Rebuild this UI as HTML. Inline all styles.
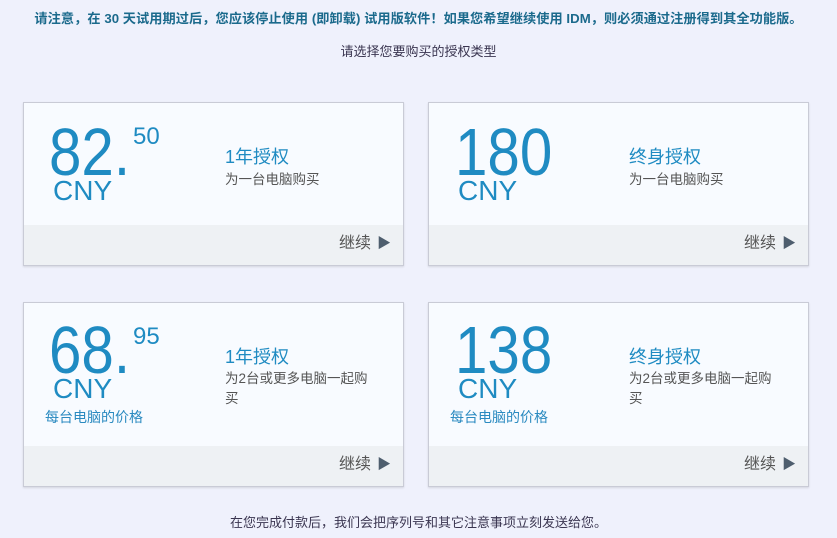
<!DOCTYPE html>
<html><head><meta charset="utf-8"><style>
*{margin:0;padding:0;box-sizing:border-box}
body{width:837px;height:538px;background:#eff1fc;font-family:"Liberation Sans","Noto Sans CJK SC",sans-serif;position:relative;overflow:hidden}
.a{position:absolute;white-space:nowrap}
.top{left:0;width:837px;text-align:center;top:8px;font-size:13.2px;font-weight:bold;color:#1b6a8c;letter-spacing:0.05px}
.sub{left:0;width:837px;text-align:center;top:41px;font-size:13px;color:#3a3550}
.card{position:absolute;width:381px;background:#f8fbff;border:1px solid #c9cbd6;box-shadow:0 1px 2px rgba(0,0,0,.12)}
.foot{position:absolute;left:0;right:0;bottom:0;height:40px;background:#eef1f4}
.big{font-size:67px;color:#1f8bc2;line-height:1;transform:scaleX(0.87);transform-origin:left top}
.cent{font-size:24px;color:#1f8bc2;line-height:1}
.cny{font-size:28px;color:#1f8bc2;line-height:1}
.t{font-size:18px;color:#1f8bc2;line-height:1}
.d{font-size:13.5px;color:#555;line-height:20px}
.per{font-size:14px;color:#2a8ac0;line-height:1}
.go{font-size:16px;color:#555;line-height:1;right:12px;bottom:13px}
.go span{color:#4e5e6e;font-size:14px;margin-left:6px}
.bot{left:0;width:837px;text-align:center;top:512px;font-size:13px;color:#3a3550}
</style></head><body>
<div class="a top">请注意，在 30 天试用期过后，您应该停止使用 (即卸载) 试用版软件！如果您希望继续使用 IDM，则必须通过注册得到其全功能版。</div>
<div class="a sub">请选择您要购买的授权类型</div>

<div class="card" style="left:23px;top:102px;height:164px">
<div class="foot"></div>
<div class="a big" style="left:25px;top:16px">82.</div>
<div class="a cent" style="left:109px;top:22px">50</div>
<div class="a cny" style="left:29px;top:74px">CNY</div>
<div class="a t" style="left:201px;top:45px">1年授权</div>
<div class="a d" style="left:201px;top:67px">为一台电脑购买</div>
<div class="a go">继续<span>▶</span></div>
</div>

<div class="card" style="left:428px;top:102px;height:164px">
<div class="foot"></div>
<div class="a big" style="left:26px;top:16px">180</div>
<div class="a cny" style="left:29px;top:74px">CNY</div>
<div class="a t" style="left:200px;top:45px">终身授权</div>
<div class="a d" style="left:200px;top:67px">为一台电脑购买</div>
<div class="a go">继续<span>▶</span></div>
</div>

<div class="card" style="left:23px;top:302px;height:185px">
<div class="foot"></div>
<div class="a big" style="left:25px;top:14px">68.</div>
<div class="a cent" style="left:109px;top:22px">95</div>
<div class="a cny" style="left:29px;top:72px">CNY</div>
<div class="a per" style="left:21px;top:107px">每台电脑的价格</div>
<div class="a t" style="left:201px;top:45px">1年授权</div>
<div class="a d" style="left:201px;top:66px;white-space:normal;width:152px">为2台或更多电脑一起购买</div>
<div class="a go">继续<span>▶</span></div>
</div>

<div class="card" style="left:428px;top:302px;height:185px">
<div class="foot"></div>
<div class="a big" style="left:26px;top:14px">138</div>
<div class="a cny" style="left:29px;top:72px">CNY</div>
<div class="a per" style="left:21px;top:107px">每台电脑的价格</div>
<div class="a t" style="left:200px;top:45px">终身授权</div>
<div class="a d" style="left:200px;top:66px;white-space:normal;width:152px">为2台或更多电脑一起购买</div>
<div class="a go">继续<span>▶</span></div>
</div>

<div class="a bot">在您完成付款后，我们会把序列号和其它注意事项立刻发送给您。</div>
</body></html>
